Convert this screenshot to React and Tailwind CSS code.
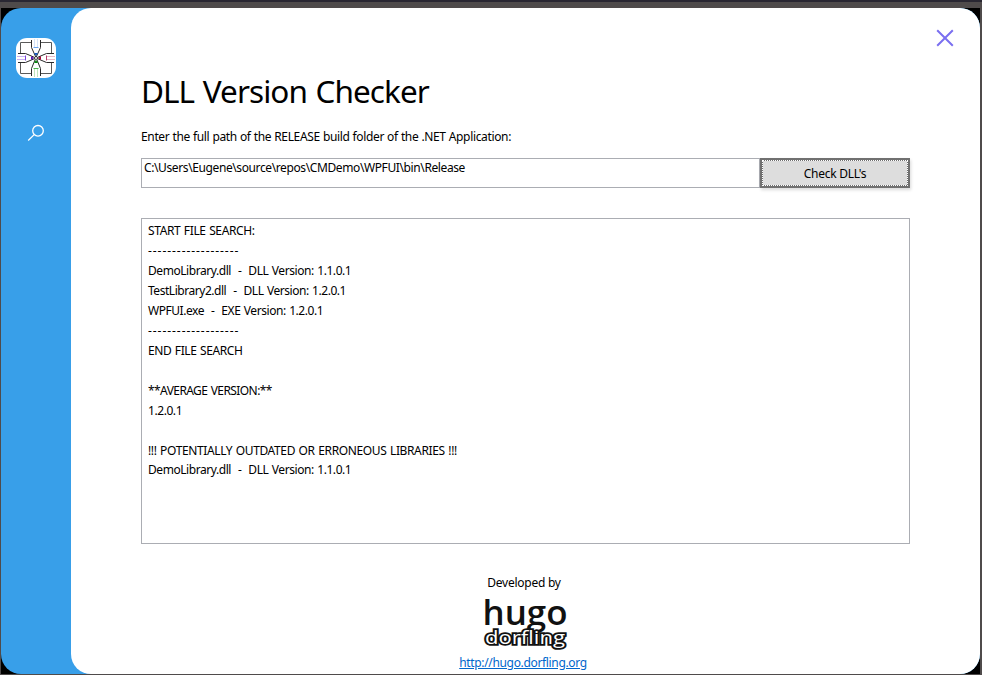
const reportLines = [
  { text: 'START FILE SEARCH:', tracking: 'tracking-[-0.38px]' },
  { text: '-------------------', tracking: 'tracking-[0.94px]' },
  { text: 'DemoLibrary.dll  -  DLL Version: 1.1.0.1', tracking: 'tracking-[-0.44px]' },
  { text: 'TestLibrary2.dll  -  DLL Version: 1.2.0.1', tracking: 'tracking-[-0.46px]' },
  { text: 'WPFUI.exe  -  EXE Version: 1.2.0.1', tracking: 'tracking-[-0.45px]' },
  { text: '-------------------', tracking: 'tracking-[0.94px]' },
  { text: 'END FILE SEARCH', tracking: 'tracking-[-0.4px]' },
  { text: '', tracking: '' },
  { text: '**AVERAGE VERSION:**', tracking: 'tracking-[-0.58px]' },
  { text: '1.2.0.1', tracking: 'tracking-[-0.43px]' },
  { text: '', tracking: '' },
  { text: '!!! POTENTIALLY OUTDATED OR ERRONEOUS LIBRARIES !!!', tracking: 'tracking-[-0.37px]' },
  { text: 'DemoLibrary.dll  -  DLL Version: 1.1.0.1', tracking: 'tracking-[-0.44px]' },
];

function AppLogo() {
  return (
    <svg width="40" height="40" viewBox="0 0 40 40" fill="none" strokeWidth="1">
      <rect width="40" height="40" rx="11" fill="#fff" />
      <path d="M15.5 4.5H4.5V15.5M24.5 4.5H35.5V15.5M4.5 24.5V35.5H15.5M35.5 24.5V35.5H24.5" stroke="#5a5a5a" />
      <g stroke="#2a2a2a">
        <path d="M15.5 2V9.5L20 19.5L24.5 30.5V38M24.5 2V9.5L20 19.5L15.5 30.5V38" />
        <path d="M2 15.5H9.5L20 20L30.5 24.5H38M2 24.5H9.5L20 20L30.5 15.5H38" />
      </g>
      <path d="M18.5 1V9M21.5 1V9" stroke="#d3e4fb" />
      <path d="M17.5 9.5H22.5" stroke="#6aa5ee" />
      <path d="M18 15h4l-2 3z" fill="#1459bd" />
      <path d="M18.5 39V31M21.5 39V31" stroke="#bde5bd" />
      <path d="M17.5 30.5H22.5" stroke="#4cb14c" />
      <path d="M18 25h4l-2-3z" fill="#078a0c" />
      <path d="M1 18.5H9M1 21.5H9" stroke="#c7b2f2" />
      <path d="M9.5 17.5V22.5" stroke="#7c45dd" />
      <path d="M15 18v4l3-2z" fill="#5b12b5" />
      <path d="M39 18.5H31M39 21.5H31" stroke="#e5b6c6" />
      <path d="M30.5 17.5V22.5" stroke="#ba3a69" />
      <path d="M25 18v4l-3-2z" fill="#a10838" />
      <circle cx="20" cy="20" r="1" fill="#fff" />
    </svg>
  );
}

function BrandLogo() {
  return (
    <svg width="92" height="58" viewBox="0 0 92 58" className="block overflow-visible" fontFamily="'Open Sans', 'Noto Sans', sans-serif">
      <text x="2.5" y="30" fontSize="33.5" fontWeight="600" fill="#111" textLength="85" lengthAdjust="spacingAndGlyphs">hugo</text>
      <text x="5" y="48.7" fontSize="19" fontWeight="500" fill="#fff" stroke="#111" strokeWidth="3.6" strokeLinejoin="miter" strokeMiterlimit="2" paintOrder="stroke" textLength="80" lengthAdjust="spacingAndGlyphs">dorfling</text>
    </svg>
  );
}

export default function App() {
  return (
    <div className="flex h-[675px] w-[982px] flex-col overflow-hidden bg-[#4f4b4b] font-['Noto_Sans','Open_Sans',sans-serif] text-[12px] text-black">
      <div className="h-[2px] shrink-0 bg-[#292732]" />
      <div className="h-[6px] shrink-0 bg-[#4f4b4b]" />
      <div className="mr-[2px] mb-px ml-px flex min-h-0 flex-1 bg-black">
        <div className="flex flex-1 rounded-[20px] bg-[#389fe9]">
          <nav className="flex w-[70px] flex-col items-center pt-[30px]">
            <AppLogo />
            <svg className="mt-[46px]" width="18" height="18" viewBox="0 0 18 18" fill="none" stroke="#fff" strokeWidth="1.3">
              <circle cx="11" cy="6.8" r="5.3" />
              <path d="M7.2 10.6L1.2 16.5" />
            </svg>
          </nav>
          <main className="flex flex-1 flex-col rounded-[20px] bg-white pl-[70px]">
            <div className="flex h-[59px] justify-end pt-[21px] pr-[26px]">
              <svg width="18" height="18" viewBox="0 0 18 18" stroke="#7a6ff0" strokeWidth="2" fill="none">
                <path d="M1.2 1.2L16.8 16.8M16.8 1.2L1.2 16.8" />
              </svg>
            </div>
            <h1 className="h-[48px] text-[31.5px] leading-[48px] tracking-[-0.95px] [word-spacing:1.4px] whitespace-nowrap">DLL Version Checker</h1>
            <p className="mt-[12px] h-[20px] leading-[20px] tracking-[-0.35px] [word-spacing:0.3px] whitespace-nowrap">Enter the full path of the RELEASE build folder of the .NET Application:</p>
            <div className="mt-[11px] flex h-[30px] w-[769px]">
              <div className="w-[619px] border border-[#abadb3] pl-[2px] leading-[18px] tracking-[-0.39px] whitespace-nowrap">C:\Users\Eugene\source\repos\CMDemo\WPFUI\bin\Release</div>
              <button className="flex flex-1 border-2 border-[#707070] bg-[#707070] shadow-[1px_2px_3px_rgba(0,0,0,0.15)]">
                <span className="flex h-full w-full items-center justify-center border border-dotted border-white bg-[#ddd] bg-clip-padding pt-[2px] tracking-[-0.27px]">Check DLL's</span>
              </button>
            </div>
            <div className="mt-[30px] h-[326px] w-[769px] border border-[#abadb3] pt-[2.05px] pl-[6px] [word-spacing:0.8px]">
              {reportLines.map((line, i) => (
                <div key={i} className="h-[19.955px] leading-[20px] whitespace-pre"><span className={line.tracking}>{line.text}</span></div>
              ))}
            </div>
            <footer className="flex w-[769px] flex-col items-center pt-[29px]">
              <span className="mr-[3px] h-[20px] leading-[20px] tracking-[-0.25px]">Developed by</span>
              <div className="mt-[2px] h-[58px]"><BrandLogo /></div>
              <a className="mr-[5px] h-[20px] leading-[20px] tracking-[-0.34px] text-[#0066cc] underline">http://hugo.dorfling.org</a>
            </footer>
          </main>
        </div>
      </div>
    </div>
  );
}
